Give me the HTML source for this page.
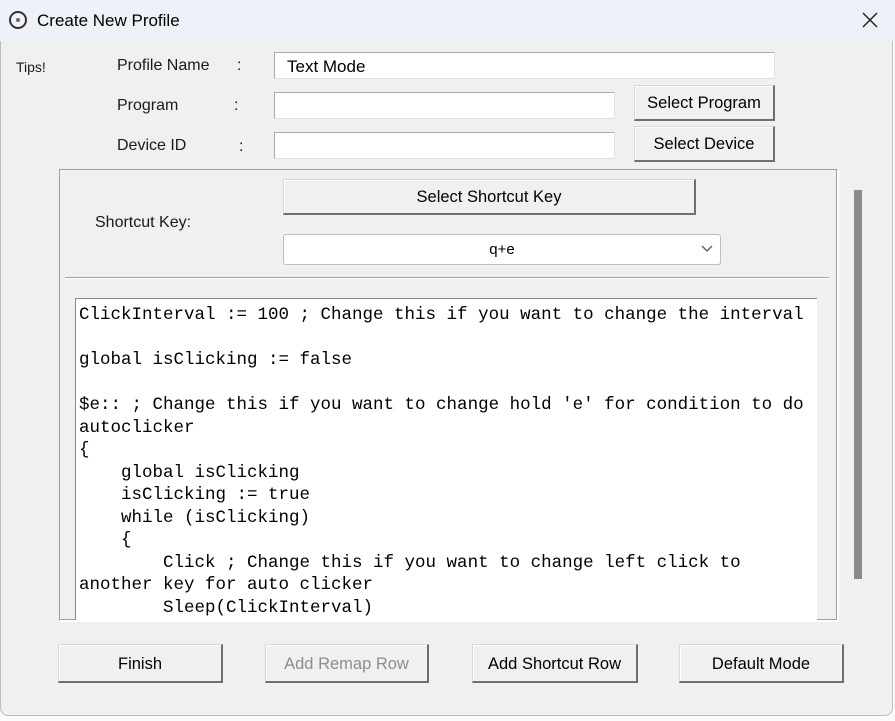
<!DOCTYPE html><html><head><style>
body{margin:0;width:895px;height:721px;background:#fbfbfb;position:relative;overflow:hidden;font-family:"Liberation Sans",sans-serif;}
.a{position:absolute}
.win{left:0;top:0;width:893px;height:716px;background:#f0f0f0;border:1px solid #bdbdbd;border-radius:0 0 8px 8px;box-sizing:border-box}
.tb{left:0;top:0;width:895px;height:41px;background:#eef2f8}
.lbl{font-size:16px;color:#1a1a1a}
.in{background:#fff;border:1px solid #ababab;border-bottom-color:#e3e3e3;border-right-color:#e3e3e3;box-sizing:border-box;font-size:17px;padding:4px 12px}
.btn{background:#f0f0f0;border:1px solid #d8d8d8;border-right:2px solid #6f6f6f;border-bottom:2px solid #6f6f6f;box-sizing:border-box;font-size:16.5px;text-align:center;color:#000;box-shadow:inset 1px 1px 0 #fff}
pre{margin:0;font-family:"Liberation Mono",monospace;font-size:17.5px;line-height:22.5px;color:#000}
</style></head><body>
<div class="a win"></div>
<div class="a tb"></div>
<div class="a" style="left:9px;top:11px;width:14px;height:14px;border:2.5px solid #333;border-radius:50%"></div>
<div class="a" style="left:16px;top:18px;width:4px;height:4px;background:#666;border-radius:50%"></div>
<div class="a" style="left:37px;top:11px;font-size:17px;color:#000">Create New Profile</div>
<svg class="a" style="left:862px;top:12px" width="16" height="16"><path d="M1 1L15 15M15 1L1 15" stroke="#222" stroke-width="1.5"/></svg>
<div class="a lbl" style="left:16px;top:59px;font-size:14px">Tips!</div>
<div class="a lbl" style="left:117px;top:57px">Profile Name</div><div class="a lbl" style="left:237px;top:57px">:</div>
<div class="a lbl" style="left:117px;top:97px">Program</div><div class="a lbl" style="left:234px;top:97px">:</div>
<div class="a lbl" style="left:117px;top:137px">Device ID</div><div class="a lbl" style="left:239px;top:138px">:</div>
<div class="a in" style="left:274px;top:52px;width:501px;height:27px;padding-top:4px">Text Mode</div>
<div class="a in" style="left:274px;top:92px;width:341px;height:27px"></div>
<div class="a in" style="left:274px;top:132px;width:341px;height:27px"></div>
<div class="a btn" style="left:634px;top:85px;width:141px;height:36px;line-height:35px">Select Program</div>
<div class="a btn" style="left:634px;top:126px;width:141px;height:36px;line-height:35px">Select Device</div>
<div class="a" style="left:59px;top:169px;width:779px;height:452px;border:1px solid #a0a0a0;border-right-color:#fff;border-bottom-color:#fff;box-sizing:border-box;box-shadow:inset -1px -1px 0 #a0a0a0,1px 1px 0 #fff"></div>
<div class="a lbl" style="left:95px;top:214px">Shortcut Key:</div>
<div class="a btn" style="left:283px;top:179px;width:413px;height:36px;line-height:35px">Select Shortcut Key</div>
<div class="a" style="left:283px;top:234px;width:438px;height:31px;background:#fff;border:1px solid #bcbcbc;border-radius:3px;box-sizing:border-box;text-align:center;font-size:15px;line-height:30px">q+e</div>
<svg class="a" style="left:700px;top:242px" width="14" height="12"><path d="M2 4 L7 9 L12 4" fill="none" stroke="#555" stroke-width="1.3"/></svg>
<div class="a" style="left:65px;top:277px;width:764px;height:1px;background:#a0a0a0;border-bottom:1px solid #fff"></div>
<div class="a" style="left:75px;top:298px;width:742px;height:322px;background:#fff;border-left:1px solid #888;border-top:1px solid #888;box-sizing:border-box;overflow:hidden;padding:5px 0 0 3px">
<pre>ClickInterval := 100 ; Change this if you want to change the interval

global isClicking := false

$e:: ; Change this if you want to change hold 'e' for condition to do
autoclicker
{
    global isClicking
    isClicking := true
    while (isClicking)
    {
        Click ; Change this if you want to change left click to
another key for auto clicker
        Sleep(ClickInterval)</pre></div>
<div class="a" style="left:854px;top:190px;width:8px;height:389px;background:#8a8a8a"></div>
<div class="a btn" style="left:58px;top:644px;width:165px;height:39px;line-height:38px">Finish</div>
<div class="a btn" style="left:265px;top:644px;width:164px;height:39px;line-height:38px;color:#8d8d8d">Add Remap Row</div>
<div class="a btn" style="left:472px;top:644px;width:166px;height:39px;line-height:38px">Add Shortcut Row</div>
<div class="a btn" style="left:679px;top:644px;width:165px;height:39px;line-height:38px">Default Mode</div>
</body></html>
